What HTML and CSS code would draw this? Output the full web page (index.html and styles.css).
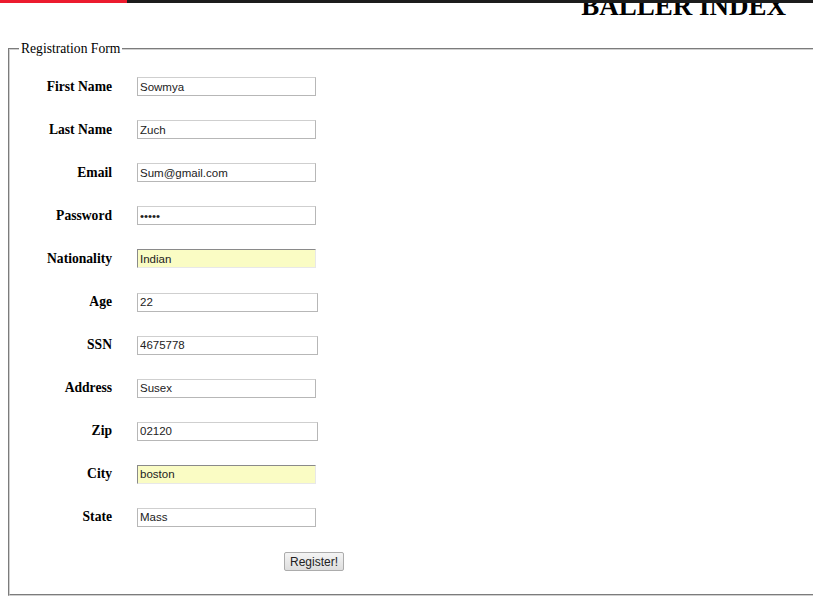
FILE: index.html
```html
<!DOCTYPE html>
<html>
<head>
<meta charset="utf-8">
<title>Baller Index - Registration</title>
<link rel="stylesheet" href="styles.css">
</head>
<body>
<div class="topbar"><span class="topbar-red"></span><span class="topbar-dark"></span></div>
<header class="header"><h1 class="title">BALLER INDEX</h1></header>
<fieldset class="form-box">
  <legend class="legend">Registration Form</legend>
  <div class="rows">
    <label class="lbl">First Name</label><input class="field" type="text" value="Sowmya">
    <label class="lbl">Last Name</label><input class="field" type="text" value="Zuch">
    <label class="lbl">Email</label><input class="field" type="text" value="Sum@gmail.com">
    <label class="lbl">Password</label><input class="field" type="password" value="abcde">
    <label class="lbl">Nationality</label><input class="field auto" type="text" value="Indian">
    <label class="lbl">Age</label><input class="field wide" type="text" value="22">
    <label class="lbl">SSN</label><input class="field wide" type="text" value="4675778">
    <label class="lbl">Address</label><input class="field" type="text" value="Susex">
    <label class="lbl">Zip</label><input class="field wide" type="text" value="02120">
    <label class="lbl">City</label><input class="field auto" type="text" value="boston">
    <label class="lbl">State</label><input class="field" type="text" value="Mass">
  </div>
  <div class="actions"><button class="btn" type="button">Register!</button></div>
</fieldset>
</body>
</html>
```
FILE: styles.css
```css
html, body {
  margin: 0;
  padding: 0;
  background: #ffffff;
  overflow-x: hidden;
}
body {
  font-family: "Liberation Serif", "Times New Roman", serif;
  color: #000;
}
.topbar {
  display: flex;
  height: 3px;
  position: relative;
  z-index: 2;
}
.topbar-red {
  width: 127px;
  background: #ec1b2e;
}
.topbar-dark {
  flex: 1;
  background: #1c1c1c;
}
.header {
  display: flex;
  justify-content: flex-end;
  padding-right: 27px;
  margin-top: -10px;
  height: 27px;
}
.title {
  margin: 0;
  font-size: 27px;
  line-height: 27px;
  font-weight: bold;
  letter-spacing: 0;
}
.form-box {
  margin: 21px -4px 0 8px;
  padding: 8px 9px 23px 9px;
  border: 2px groove #d0d0d0;
}
.legend {
  padding: 0 2px;
  font-size: 13.6px;
}
.rows {
  display: grid;
  grid-template-columns: 93px auto;
  grid-auto-rows: 43.1px;
  column-gap: 25px;
  align-items: center;
  justify-content: start;
}
.lbl {
  text-align: right;
  font-weight: bold;
  font-size: 13.6px;
}
.field {
  box-sizing: border-box;
  width: 179px;
  height: 19px;
  margin: 0;
  padding: 0 2px;
  font-family: "Liberation Sans", Arial, sans-serif;
  font-size: 11.5px;
  color: #222;
  background: #fff;
  border: 1px solid #b7b7b7;
  border-top-color: #cfcfcf;
  outline: none;
}
.field.wide {
  width: 181px;
}
.field.auto {
  background: #fafcc4;
  border-color: #e8e8e8;
  border-top-color: #8a8a8a;
  border-left-color: #8a8a8a;
}
.actions {
  display: flex;
  padding-left: 265px;
  margin-top: 13px;
}
.btn {
  box-sizing: border-box;
  width: 60px;
  height: 19px;
  padding: 0;
  font-family: "Liberation Sans", Arial, sans-serif;
  font-size: 12px;
  color: #222;
  background: linear-gradient(#f4f4f4, #dedede);
  border: 1px solid #acacac;
  border-radius: 2px;
}
```
